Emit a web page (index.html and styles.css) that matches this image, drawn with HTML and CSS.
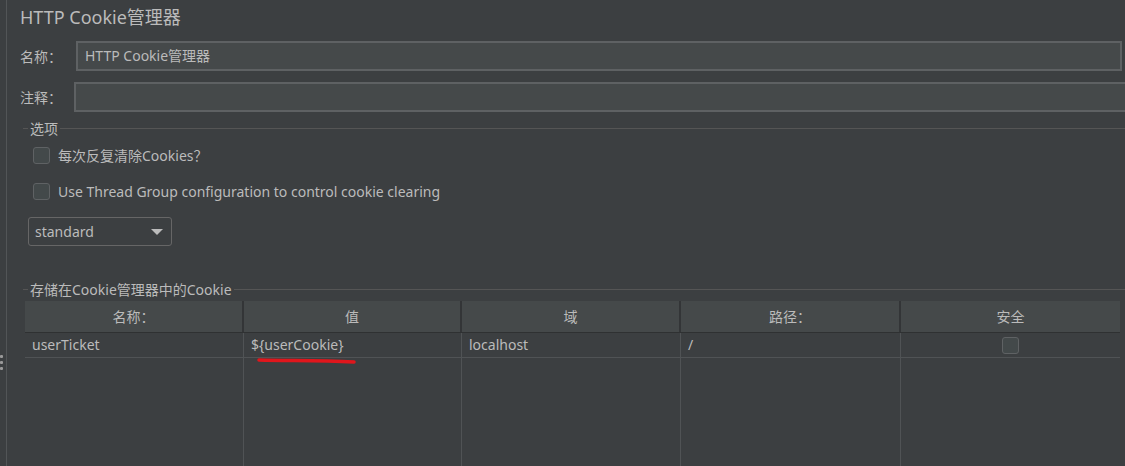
FILE: index.html
```html
<!DOCTYPE html>
<html lang="zh">
<head>
<meta charset="utf-8">
<title>HTTP Cookie管理器</title>
<link rel="stylesheet" href="styles.css">
</head>
<body>
<div class="app">
  <div class="gutter">
    <span class="dot"></span><span class="dot"></span><span class="dot"></span>
  </div>
  <div class="main">
    <h1 class="title">HTTP Cookie管理器</h1>
    <div class="row row-name">
      <label class="label">名称：</label>
      <div class="field">HTTP Cookie管理器</div>
    </div>
    <div class="row row-comment">
      <label class="label">注释：</label>
      <div class="field"></div>
    </div>

    <div class="group-title"><span>选项</span></div>
    <div class="options">
      <div class="check-row"><span class="box"></span><span>每次反复清除Cookies<span class="cjk">？</span></span></div>
      <div class="check-row"><span class="box"></span><span>Use Thread Group configuration to control cookie clearing</span></div>
      <div class="combo"><span>standard</span><span class="arrow"></span></div>
    </div>

    <div class="group-title group-cookies"><span>存储在Cookie管理器中的Cookie</span></div>
    <div class="table">
      <div class="thead">
        <div class="th">名称：</div>
        <div class="th">值</div>
        <div class="th">域</div>
        <div class="th">路径：</div>
        <div class="th">安全</div>
      </div>
      <div class="tr">
        <div class="td">userTicket</div>
        <div class="td td-value">${userCookie}
          <svg class="mark" width="110" height="12" viewBox="0 0 110 12"><path d="M3 4 C 30 5, 60 4, 98 6" fill="none" stroke="#e0161c" stroke-width="3.5" stroke-linecap="round"/></svg>
        </div>
        <div class="td">localhost</div>
        <div class="td">/</div>
        <div class="td td-center"><span class="box"></span></div>
      </div>
      <div class="tbody-fill">
        <div class="col"></div><div class="col"></div><div class="col"></div><div class="col"></div><div class="col"></div>
      </div>
    </div>
  </div>
</div>
</body>
</html>
```
FILE: styles.css
```css
* { box-sizing: border-box; }
html, body { margin: 0; padding: 0; }
body {
  background: #3c3f41;
  color: #bbbbbb;
  font-family: "Noto Sans", "Noto Sans CJK SC", sans-serif;
  font-size: 14px;
  width: 1125px;
  height: 466px;
  overflow: hidden;
}
.cjk { font-family: "Noto Sans CJK SC", sans-serif; }
.app { display: flex; height: 466px; }
.gutter {
  width: 7px;
  flex: none;
  border-right: 1px solid #525557;
  display: flex;
  flex-direction: column;
  gap: 3px;
  padding-top: 355px;
}
.dot { width: 3px; height: 3px; background: #9a9a9a; border-radius: 1px; }
.main { flex: 1; padding-left: 13px; display: flex; flex-direction: column; min-width: 0; }
.title {
  margin: 0;
  font-size: 18px;
  font-weight: normal;
  line-height: 24px;
  padding-top: 5px;
  height: 40px;
}
.row { display: flex; align-items: center; height: 30px; }
.row-name { margin-top: 1px; }
.row-comment { margin-top: 11px; }
.label { width: 56px; flex: none; }
.row-comment .label { width: 54px; }
.field {
  flex: 1;
  height: 30px;
  border: 2px solid #5e6163;
  background: #45494a;
  padding-left: 7px;
  line-height: 26px;
}
.row-name .field { margin-right: 3px; }
.row-comment .field { margin-right: -2px; }
.group-title {
  display: flex;
  align-items: center;
  margin-top: 5px;
  height: 22px;
  margin-left: 3px;
}
.group-title::before {
  content: "";
  width: 5px;
  border-top: 1px solid #555;
  margin-right: 2px;
}
.group-title::after {
  content: "";
  flex: 1;
  border-top: 1px solid #555;
  margin-left: 2px;
}
.options { display: flex; flex-direction: column; padding-left: 13px; }
.check-row { display: flex; align-items: center; gap: 8px; height: 24px; margin-top: 4px; }
.check-row + .check-row { margin-top: 12px; }
.box {
  width: 17px;
  height: 17px;
  border: 1px solid #5f6264;
  background: #43494a;
  border-radius: 3px;
  display: inline-block;
}
.combo {
  margin-top: 14px;
  margin-left: -5px;
  width: 144px;
  height: 29px;
  border: 1px solid #666;
  border-radius: 3px;
  display: flex;
  align-items: center;
  justify-content: space-between;
  padding: 0 8px 0 6px;
}
.arrow {
  width: 0; height: 0;
  border-left: 6px solid transparent;
  border-right: 6px solid transparent;
  border-top: 6px solid #bbbbbb;
}
.group-cookies { margin-top: 32px; }
.table { margin-left: 5px; width: 1095px; flex: 1; display: flex; flex-direction: column; }
.thead, .tr, .tbody-fill { display: grid; grid-template-columns: 219px 218px 219px 220px 219px; }
.thead { height: 32px; background: #45494a; border-bottom: 1px solid #2f3132; margin-top: 1px; }
.th {
  text-align: center;
  line-height: 31px;
  border-right: 2px solid #333537;
}
.th:last-child { border-right: none; }
.tr { height: 25px; border-bottom: 1px solid #505355; }
.td { padding-left: 7px; line-height: 24px; border-right: 1px solid #505355; position: relative; }
.td:last-child { border-right: none; }
.td-center { display: flex; justify-content: center; align-items: center; padding-left: 0; }
.mark { position: absolute; left: 12px; top: 23px; overflow: visible; }
.tbody-fill { flex: 1; }
.col { border-right: 1px solid #505355; }
.col:last-child { border-right: none; }
```
